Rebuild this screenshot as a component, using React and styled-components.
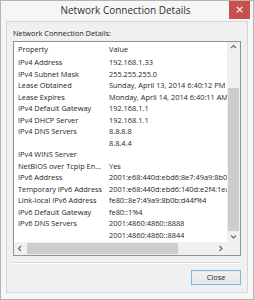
import styled, { createGlobalStyle } from 'styled-components';

const Global = createGlobalStyle`
    html, body {
        margin: 0;
        padding: 0;
        background: #ffffff;
    }
    * {
        box-sizing: border-box;
    }
`;

const Window = styled.div`
    width: 254px;
    height: 300px;
    display: flex;
    flex-direction: column;
    background: #f6f6f6;
    border: 1px solid #b4b4b4;
    padding: 0 5px 6px 5px;
    font-family: "Open Sans", "Noto Sans", sans-serif;
    color: #222;
`;

const TitleBar = styled.div`
    height: 20px;
    display: grid;
    grid-template-columns: 1fr auto 1fr;
    align-items: start;
    margin: 0 -2px 0 -5px;
`;

const Title = styled.div`
    grid-column: 2;
    font-size: 10px;
    line-height: 19px;
    color: #303030;
    white-space: nowrap;
`;

const CloseBtn = styled.div`
    grid-column: 3;
    justify-self: end;
    width: 21px;
    height: 18px;
    background: #c9504a;
    color: #fff;
    font-size: 11px;
    line-height: 17px;
    text-align: center;
    font-family: "DejaVu Sans", sans-serif;
`;

const Client = styled.div`
    flex: 1;
    display: flex;
    flex-direction: column;
    background: #f0f0f0;
    border: 1px solid #d6d6d6;
    padding: 5px 6px 7px 6px;
`;

const Label = styled.div`
    font-size: 7.4px;
    line-height: 12px;
    height: 12px;
    margin-bottom: 2px;
    color: #1e1e1e;
    white-space: nowrap;
`;

const ListBox = styled.div`
    height: 215px;
    border: 1px solid #8e9196;
    background: #fff;
    display: grid;
    grid-template-columns: 1fr 13px;
    grid-template-rows: 1fr 13px;
`;

const Content = styled.div`
    overflow: hidden;
    display: flex;
    flex-direction: column;
`;

const Row = styled.div`
    display: grid;
    grid-template-columns: 91px max-content;
    height: ${({ $header }) => ($header ? '15px' : '11.5px')};
    line-height: ${({ $header }) => ($header ? '15px' : '11.5px')};
    font-size: 7.4px;
    white-space: nowrap;
    color: #1e1e1e;
`;

const Cell = styled.div`
    padding-left: 4px;
    overflow: hidden;
`;

const VScroll = styled.div`
    background: #f0f0f0;
    display: flex;
    flex-direction: column;
    align-items: center;
`;

const HScroll = styled.div`
    background: #f0f0f0;
    display: flex;
    align-items: center;
`;

const Corner = styled.div`
    background: #f0f0f0;
`;

const ArrowBtn = styled.div`
    flex: none;
    width: ${({ $horiz }) => ($horiz ? '12px' : '13px')};
    height: ${({ $horiz }) => ($horiz ? '13px' : '10px')};
    display: flex;
    align-items: center;
    justify-content: center;
`;

const Track = styled.div`
    flex: 1;
    align-self: stretch;
    display: flex;
    flex-direction: ${({ $horiz }) => ($horiz ? 'row' : 'column')};
    padding: ${({ $horiz }) => ($horiz ? '1px 0' : '0 1px')};
`;

const Thumb = styled.div`
    background: #cdcdcd;
`;

const Separator = styled.div`
    height: 2px;
    margin-top: 6px;
    border-top: 1px solid #d9d9d9;
    border-bottom: 1px solid #ffffff;
`;

const Footer = styled.div`
    display: flex;
    justify-content: flex-end;
    margin-top: 6px;
`;

const Button = styled.div`
    width: 50px;
    height: 15px;
    border: 1px solid #7fb4e5;
    background: linear-gradient(#f2f2f2, #e6e6e6);
    box-shadow: inset 0 0 0 1px #dcecfb;
    font-size: 7.4px;
    line-height: 13px;
    text-align: center;
    color: #1e1e1e;
`;

const Chevron = ({ dir }) => {
    const pts = {
        up: '1,4 3.5,1.5 6,4',
        down: '1,1.5 3.5,4 6,1.5',
        left: '4,1 1.5,3.5 4,6',
        right: '1.5,1 4,3.5 1.5,6',
    }[dir];
    const horiz = dir === 'left' || dir === 'right';
    return (
        <svg width={horiz ? 6 : 7} height={horiz ? 7 : 6} viewBox={horiz ? '0 0 6 7' : '0 0 7 6'}>
            <polyline points={pts} fill="none" stroke="#6a6a6a" strokeWidth="1.2" />
        </svg>
    );
};

const rows = [
    ['IPv4 Address', '192.168.1.33'],
    ['IPv4 Subnet Mask', '255.255.255.0'],
    ['Lease Obtained', 'Sunday, April 13, 2014 6:40:12 PM'],
    ['Lease Expires', 'Monday, April 14, 2014 6:40:11 AM'],
    ['IPv4 Default Gateway', '192.168.1.1'],
    ['IPv4 DHCP Server', '192.168.1.1'],
    ['IPv4 DNS Servers', '8.8.8.8'],
    ['', '8.8.4.4'],
    ['IPv4 WINS Server', ''],
    ['NetBIOS over Tcpip En...', 'Yes'],
    ['IPv6 Address', '2001:e68:440d:ebd6:8e7:49a9:8b0b:d44f'],
    ['Temporary IPv6 Address', '2001:e68:440d:ebd6:140d:e2f4:1ea9:7c21'],
    ['Link-local IPv6 Address', 'fe80::8e7:49a9:8b0b:d44f%4'],
    ['IPv6 Default Gateway', 'fe80::1%4'],
    ['IPv6 DNS Servers', '2001:4860:4860::8888'],
    ['', '2001:4860:4860::8844'],
];

const App = () => {
    return (
        <>
            <Global />
            <Window>
                <TitleBar>
                    <Title>Network Connection Details</Title>
                    <CloseBtn>×</CloseBtn>
                </TitleBar>
                <Client>
                    <Label>Network Connection Details:</Label>
                    <ListBox>
                        <Content>
                            <Row $header>
                                <Cell>Property</Cell>
                                <Cell>Value</Cell>
                            </Row>
                            {rows.map(([p, v], i) => (
                                <Row key={i}>
                                    <Cell>{p}</Cell>
                                    <Cell>{v}</Cell>
                                </Row>
                            ))}
                        </Content>
                        <VScroll>
                            <ArrowBtn><Chevron dir="up" /></ArrowBtn>
                            <Track>
                                <div style={{ height: 36 }} />
                                <Thumb style={{ height: 143 }} />
                            </Track>
                            <ArrowBtn><Chevron dir="down" /></ArrowBtn>
                        </VScroll>
                        <HScroll>
                            <ArrowBtn $horiz><Chevron dir="left" /></ArrowBtn>
                            <Track $horiz>
                                <Thumb style={{ width: 151, marginLeft: 1 }} />
                            </Track>
                            <ArrowBtn $horiz><Chevron dir="right" /></ArrowBtn>
                        </HScroll>
                        <Corner />
                    </ListBox>
                    <Separator />
                    <Footer>
                        <Button>Close</Button>
                    </Footer>
                </Client>
            </Window>
        </>
    );
};

export default App;
